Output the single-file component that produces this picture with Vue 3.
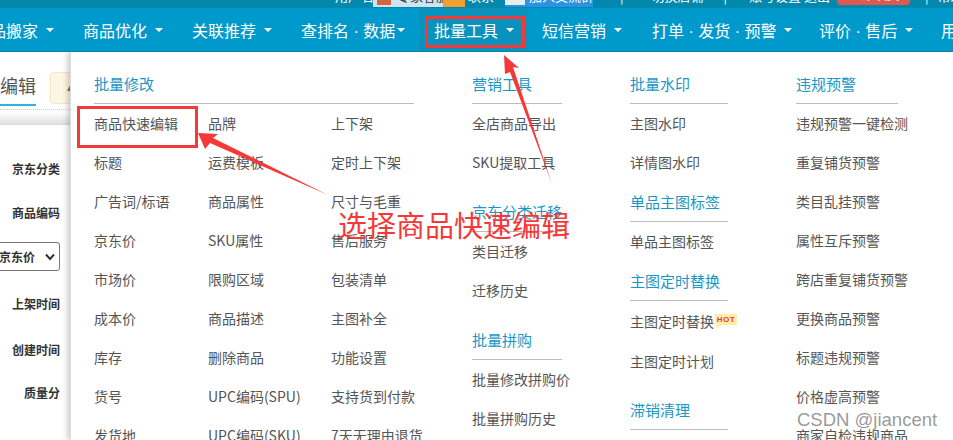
<template>
  <div class="page">
    <div class="top-strip">
      <span class="ts ts-name">用户名</span>
      <span class="qq-badge"><i class="qq-ico"></i>专家客服</span>
      <span class="qq-more"></span>
      <span class="ts ts-a">联系</span>
      <span class="wx-badge"><i class="wx-ico"></i>加入交流群</span>
      <span class="ts ts-sep1">|</span>
      <span class="ts ts-b">切换店铺</span>
      <span class="ts ts-sep2">|</span>
      <span class="ts ts-c">账号设置 退出</span>
      <span class="red-pill">立即续费</span>
      <span class="ts ts-sep3">|</span>
      <span class="ts ts-d">帮助</span>
    </div>

    <nav class="nav">
      <a
        v-for="item in navItems"
        :key="item.label"
        :class="['nav-item', { active: item.active, tight: item.tight }]"
      >
        {{ item.label }}<i v-if="item.caret !== false" class="caret"></i>
      </a>
    </nav>

    <div class="main">
      <aside class="side">
        <div class="tab-row">
          <span class="tab">编辑</span>
          <span class="notice"><i class="notice-tri"></i></span>
        </div>
        <div class="tab-shadow"></div>
        <div class="form">
          <label class="lbl l1">京东分类</label>
          <label class="lbl l2">商品编码</label>
          <div class="sel-wrap">
            <select class="price-sel"><option>京东价</option></select>
            <svg class="sel-chevron" width="10" height="8" viewBox="0 0 10 8">
              <path d="M1 1.5 5 6l4-4.5" fill="none" stroke="#333" stroke-width="2" />
            </svg>
          </div>
          <label class="lbl l3">上架时间</label>
          <label class="lbl l4">创建时间</label>
          <label class="lbl l5">质量分</label>
        </div>
      </aside>

      <section class="menu">
        <div class="col col-a">
          <div class="head">批量修改</div>
          <div class="grid">
            <a v-for="t in editItems" :key="t" class="link">{{ t }}</a>
          </div>
        </div>
        <div v-for="col in columns" :key="col.name" :class="['col', col.name]">
          <div v-for="g in col.groups" :key="g.title" :class="['group', { spaced: g.spaced }]">
            <div class="head">{{ g.title }}</div>
            <a v-for="t in g.items" :key="t" class="link">
              {{ t }}<span v-if="t === '主图定时替换'" class="hot">HOT</span>
            </a>
          </div>
        </div>
      </section>
    </div>

    <!-- screenshot annotations, drawn on top of the page -->
    <div class="mark mark-nav"></div>
    <div class="mark mark-item"></div>
    <svg class="arrows" width="953" height="440" viewBox="0 0 953 440">
      <polygon points="198,133 218,134 213,138 328,195 210,143 205,149" fill="#f53838" />
      <polygon points="504,55 519,68 513,67 552,184 510,72 505,74" fill="#f53838" />
    </svg>
    <div class="callout">选择商品快速编辑</div>
    <div class="watermark">CSDN @jiancent</div>
  </div>
</template>

<script setup>
const navItems = [
  { label: '商品搬家' },
  { label: '商品优化' },
  { label: '关联推荐' },
  { label: '查排名 · 数据', tight: true },
  { label: '批量工具', active: true },
  { label: '短信营销' },
  { label: '打单 · 发货 · 预警' },
  { label: '评价 · 售后' },
  { label: '用户管理', caret: false },
]

const editItems = [
  '商品快速编辑', '品牌', '上下架',
  '标题', '运费模板', '定时上下架',
  '广告词/标语', '商品属性', '尺寸与毛重',
  '京东价', 'SKU属性', '售后服务',
  '市场价', '限购区域', '包装清单',
  '成本价', '商品描述', '主图补全',
  '库存', '删除商品', '功能设置',
  '货号', 'UPC编码(SPU)', '支持货到付款',
  '发货地', 'UPC编码(SKU)', '7天无理由退货',
]

const columns = [
  {
    name: 'col-b',
    groups: [
      { title: '营销工具', items: ['全店商品导出', 'SKU提取工具'] },
      { title: '京东分类迁移', spaced: true, items: ['类目迁移', '迁移历史'] },
      { title: '批量拼购', spaced: true, items: ['批量修改拼购价', '批量拼购历史'] },
    ],
  },
  {
    name: 'col-c',
    groups: [
      { title: '批量水印', items: ['主图水印', '详情图水印'] },
      { title: '单品主图标签', items: ['单品主图标签'] },
      { title: '主图定时替换', items: ['主图定时替换', '主图定时计划'] },
      { title: '滞销清理', spaced: true, items: [] },
    ],
  },
  {
    name: 'col-d',
    groups: [
      {
        title: '违规预警',
        items: [
          '违规预警一键检测', '重复铺货预警', '类目乱挂预警', '属性互斥预警',
          '跨店重复铺货预警', '更换商品预警', '标题违规预警', '价格虚高预警', '商家自检违规商品',
        ],
      },
    ],
  },
]
</script>

<style>
html, body { margin: 0; background: #fff; overflow: hidden; }
</style>

<style scoped>
.page {
  position: relative; width: 953px; height: 440px; overflow: hidden;
  display: flex; flex-direction: column; background: #fff;
  font-family: "Noto Sans CJK SC", "Noto Sans", sans-serif;
}

/* top strip, only the bottom of its content is in the crop */
.top-strip {
  height: 8px; flex-shrink: 0; background: #0388ad; overflow: hidden; box-sizing: border-box;
  padding-bottom: 1px; display: flex; align-items: flex-end; color: #fff; font-size: 13px; line-height: 18px;
}
.ts { white-space: nowrap; flex-shrink: 0; padding-bottom: 2px; }
.ts-name { margin-left: 335px; width: 38px; }
.qq-badge {
  width: 70px; height: 20px; background: #cde4f3; color: #333; flex-shrink: 0; padding-bottom: 2px;
  display: flex; align-items: flex-end; white-space: nowrap; box-sizing: border-box;
}
.qq-ico { width: 14px; height: 14px; margin: 0 6px 0 4px; background: #d9643c; flex-shrink: 0; }
.qq-more { width: 22px; height: 20px; background: #f0a030; flex-shrink: 0; }
.ts-a { margin-left: 3px; width: 37px; }
.wx-badge {
  width: 88px; height: 20px; background: #2c92e2; color: #fff; flex-shrink: 0; padding-bottom: 2px;
  display: flex; align-items: flex-end; white-space: nowrap; overflow: hidden; box-sizing: border-box;
}
.wx-ico { width: 20px; height: 18px; background: #e6eef2; flex-shrink: 0; margin-right: 4px; }
.ts-sep1 { margin-left: 27px; }
.ts-b { margin-left: 28px; width: 60px; }
.ts-sep2 { margin-left: 12px; }
.ts-c { margin-left: 22px; width: 88px; overflow: hidden; }
.red-pill {
  width: 73px; height: 20px; border-radius: 4px; background: #e0584f; color: #fff; flex-shrink: 0;
  text-align: center; font-size: 13px; margin-bottom: 2px;
}
.ts-sep3 { margin-left: 15px; }
.ts-d { margin-left: 9px; }

/* main nav */
.nav {
  height: 44px; flex-shrink: 0; background: #0099cb; display: flex;
  border-bottom: 1px solid #0a86ab; box-sizing: border-box;
}
.nav-item {
  flex-shrink: 0; width: 109px; box-sizing: border-box; padding-left: 15px;
  display: flex; align-items: center; color: #fff; font-size: 16px; white-space: pre;
  font-family: "Liberation Sans", "Noto Sans CJK SC", sans-serif;
}
.nav-item:first-child { margin-left: -41px; }
.nav-item:nth-child(4) { width: 133px; }
.nav-item:nth-child(5) { width: 108px; }
.nav-item:nth-child(6) { width: 110px; }
.nav-item:nth-child(7) { width: 167px; }
.nav-item:nth-child(8) { width: 122px; }
.nav-item.active { background: #0a92bd; }
.caret {
  width: 0; height: 0; margin-left: 8px; flex-shrink: 0;
  border-left: 4px solid transparent; border-right: 4px solid transparent; border-top: 4px solid #fff;
}
.nav-item.tight .caret { margin-left: 2px; }

.main { flex: 1; min-height: 0; display: flex; overflow: hidden; }

/* page behind the dropdown */
.side { width: 70px; flex-shrink: 0; overflow: hidden; color: #333; }
.tab-row {
  height: 58px; box-sizing: border-box; display: flex; align-items: flex-end; position: relative;
  border-bottom: 1px dotted #ccc;
}
.tab {
  width: 36px; height: 36px; flex-shrink: 0; margin-bottom: 3px; box-sizing: border-box;
  font-size: 18px; line-height: 30px; color: #555; border-bottom: 2px solid #2cb5dc;
  text-align: right; white-space: nowrap;
}
.notice {
  width: 40px; height: 32px; margin: 0 0 5px 14px; flex-shrink: 0; box-sizing: border-box;
  background: #fdf6e3; border: 1px solid #f5e6c4; border-radius: 4px; position: relative;
}
.notice-tri {
  position: absolute; left: 16px; top: 9px; width: 0; height: 0;
  border-left: 5px solid transparent; border-right: 5px solid transparent; border-bottom: 9px solid #9a6a2c;
}
.tab-shadow { height: 15px; background: linear-gradient(#fff, #fafafa 30%, #dcdcdc); }
.form { display: flex; flex-direction: column; align-items: flex-end; padding-right: 10px; }
.lbl { font-size: 12px; font-weight: 700; line-height: 18px; color: #333; white-space: nowrap; flex-shrink: 0; }
.l1 { margin-top: 35px; }
.l2 { margin-top: 26px; }
.sel-wrap { position: relative; width: 66px; height: 29px; margin-top: 20px; flex-shrink: 0; }
.price-sel {
  appearance: none; display: block; width: 100%; height: 100%; box-sizing: border-box;
  border: 1px solid #767676; border-radius: 3px; background: #fff; color: #333;
  font: 700 12px "Noto Sans CJK SC", sans-serif; padding: 0 0 0 4px;
}
.sel-chevron { position: absolute; right: 5px; top: 11px; pointer-events: none; }
.l3 { margin-top: 24px; }
.l4 { margin-top: 28px; }
.l5 { margin-top: 25px; }

/* dropdown */
.menu {
  flex: 1; min-width: 0; background: #fff; display: flex; padding: 12px 0 0 23px;
  border-left: 1px solid #ddd; box-shadow: -3px 0 5px rgba(0, 0, 0, .18); position: relative; box-sizing: border-box;
}
.col { flex-shrink: 0; }
.col-a { width: 378px; }
.col-b { width: 158px; }
.col-c { width: 166px; }
.col-d { width: 160px; }
.head {
  height: 39px; line-height: 39px; border-bottom: 1px solid #bbb;
  color: #1a97c4; font-size: 15px; white-space: nowrap;
}
.col-a .head { width: 320px; }
.col-b .head { width: 90px; }
.col-c .head { width: 98px; }
.col-d .head { width: 102px; }
.group.spaced { margin-top: 10px; }
.col-c .group.spaced { margin-top: 9px; }
.grid { display: grid; grid-template-columns: 114px 123px 1fr; }
.link {
  display: block; height: 39px; line-height: 39px; color: #555; font-size: 14px; white-space: nowrap;
}
.col-c .group:nth-child(3) .link { height: 40px; line-height: 40px; }
.hot {
  display: inline-block; position: relative; vertical-align: 5px; margin-left: 1px;
  height: 11px; width: 22px; background: #fff0a0; color: #e8336a; text-align: center;
  font: 700 8px/11px "Liberation Sans", sans-serif; letter-spacing: .6px;
}
.hot::after {
  content: ""; position: absolute; left: 2px; top: 11px; width: 0; height: 0;
  border-top: 4px solid #fff0a0; border-right: 4px solid transparent;
}

/* annotations */
.mark { position: absolute; box-sizing: border-box; border: 3px solid #f53838; }
.mark-nav { left: 425px; top: 16px; width: 100px; height: 32px; }
.mark-item { left: 77px; top: 106px; width: 121px; height: 42px; }
.arrows { position: absolute; left: 0; top: 0; pointer-events: none; }
.callout {
  position: absolute; left: 338px; top: 204px; color: #f53838; font-size: 29px; line-height: 40px; white-space: nowrap;
}
.watermark {
  position: absolute; left: 797px; top: 409px; color: rgba(120, 120, 120, .75);
  font: 18.5px/22px "Liberation Sans", sans-serif; white-space: nowrap;
  text-shadow: 0 0 2px #fff;
}
</style>
